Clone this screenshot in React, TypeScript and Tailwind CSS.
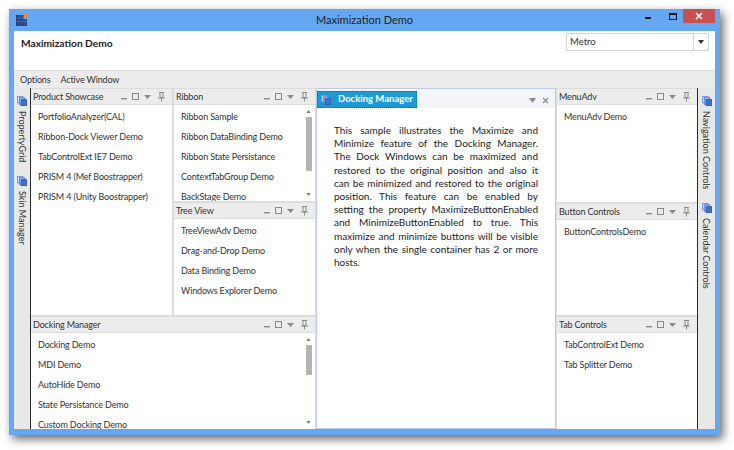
const FONT = "font-['Lato','Noto_Sans',sans-serif]";

function DocIcon({ size = 11 }: { size?: number }) {
  return (
    <svg width={size} height={size} viewBox="0 0 11 11" className="shrink-0" aria-hidden>
      <rect x="0.5" y="0.5" width="6" height="7" fill="#dbe8fa" stroke="#6f94d8" />
      <rect x="2.5" y="2" width="6" height="7" fill="#9dbdf0" stroke="#4f7dd0" />
      <rect x="4.5" y="4" width="6" height="6.5" fill="#3f70cc" stroke="#2f5fb8" />
    </svg>
  );
}

function PaneButtons() {
  return (
    <svg width="45" height="10" viewBox="0 0 45 10" className="shrink-0" aria-hidden>
      <rect x="0" y="6" width="6" height="1.4" fill="#8a8a8a" />
      <rect x="11.5" y="1.5" width="6" height="6" fill="none" stroke="#8a8a8a" />
      <path d="M23 3h7l-3.5 4z" fill="#8a8a8a" />
      <path d="M38 0.5h5M39 0.5v5h3v-5M37 6h7M40.5 6v3.5" fill="none" stroke="#8a8a8a" />
    </svg>
  );
}

function Scrollbar({ thumb }: { thumb: number }) {
  return (
    <div className="absolute bottom-0 right-[3px] top-0 flex w-[7px] flex-col items-center">
      <svg width="5" height="3" viewBox="0 0 5 3" className="mt-[5px] shrink-0" aria-hidden>
        <path d="M0.5 3h4L2.5 0z" fill="#777" />
      </svg>
      <div className="mt-[4px] w-[6px] bg-[#b4b4b4]" style={{ height: thumb }} />
      <div className="flex-1" />
      <svg width="5" height="3" viewBox="0 0 5 3" className="mb-[5px] shrink-0" aria-hidden>
        <path d="M0.5 0h4L2.5 3z" fill="#777" />
      </svg>
    </div>
  );
}

function Pane({
  title,
  items,
  thumb,
  className,
}: {
  title: string;
  items: string[];
  thumb?: number;
  className: string;
}) {
  return (
    <div className={`flex min-h-0 min-w-0 flex-col overflow-hidden bg-white ${className}`}>
      <div className="flex h-[16px] shrink-0 items-center justify-between border-b border-[#dcdcdc] bg-[#ececec] pl-[2px] pr-[6px] text-[9px] tracking-[-0.15px] text-[#333]">
        <span className="whitespace-nowrap">{title}</span>
        <PaneButtons />
      </div>
      <div className="relative min-h-0 flex-1 overflow-hidden pl-[7px] pt-[2px]">
        {items.map((item) => (
          <div
            key={item}
            className="h-[20px] whitespace-nowrap text-[9px] leading-[20px] tracking-[-0.15px] text-[#333]"
          >
            {item}
          </div>
        ))}
        {thumb ? <Scrollbar thumb={thumb} /> : null}
      </div>
    </div>
  );
}

function RailTab({ label, className }: { label: string; className?: string }) {
  return (
    <div className={`flex flex-col items-center gap-[5px] ${className ?? ""}`}>
      <DocIcon size={10} />
      <span className="whitespace-nowrap text-[9px] leading-none text-[#333] [writing-mode:vertical-rl]">
        {label}
      </span>
    </div>
  );
}

const DESCRIPTION = [
  "This sample illustrates the Maximize and",
  "Minimize feature of the Docking Manager.",
  "The Dock Windows can be maximized and",
  "restored to the original position and also it",
  "can be minimized and restored to the original",
  "position. This feature can be enabled by",
  "setting the property MaximizeButtonEnabled",
  "and MinimizeButtonEnabled to true. This",
  "maximize and minimize buttons will be visible",
  "only when the single container has 2 or more",
];

export default function App() {
  return (
    <div className={`h-[450px] w-[734px] overflow-hidden bg-white pl-[9px] pt-[9px] ${FONT}`}>
      <div className="flex h-[426px] w-[711px] flex-col bg-[#64a8f4] px-[5px] pb-[6px] shadow-[3px_4px_9px_rgba(0,0,0,0.6)]">
        {/* title bar */}
        <div className="relative flex h-[22px] shrink-0 items-center justify-center text-[11px] text-[#222]">
          <svg width="12" height="12" viewBox="0 0 12 12" className="absolute left-[2px] top-[5px]" aria-hidden>
            <path d="M0 1h7.5v11H0zM7.5 5H11v7H7.5z" fill="#26407f" />
            <path d="M3 1v11M6 1v11M0 4h8M0 7.5h11M9 5v7" stroke="#5d78b5" strokeWidth="0.5" />
            <rect x="8" y="0" width="3.5" height="3.5" fill="#f08a24" />
          </svg>
          <span>Maximization Demo</span>
          <div className="absolute right-0 top-0 flex h-[14px] items-start">
            <div className="mr-[18px] mt-[8px] h-[2px] w-[6px] bg-[#111]" />
            <div className="mr-[6px] mt-[4px] h-[7px] w-[8px] border border-t-2 border-[#111]" />
            <div className="flex h-[14px] w-[32px] items-center justify-center bg-[#c75050]">
              <svg width="8" height="8" viewBox="0 0 8 8" aria-hidden>
                <path d="M1 1l6 6M7 1L1 7" stroke="#fff" strokeWidth="1.6" />
              </svg>
            </div>
          </div>
        </div>

        {/* header */}
        <div className="flex h-[40px] shrink-0 justify-between border-b border-[#dcdcdc] bg-white pl-[7px] pr-[6px] pt-[2px]">
          <span className="mt-[3px] text-[10.2px] font-bold leading-[15px] text-[#222]">Maximization Demo</span>
          <div className="flex h-[18px] w-[143px] items-center justify-between border border-[#d4d4d4] bg-white pl-[3px] pr-[4px] text-[9.5px] text-[#333]">
            <span className="pt-[1px]">Metro</span>
            <span className="flex h-full items-center border-l border-[#d4d4d4] pl-[4px]">
              <svg width="6" height="4" viewBox="0 0 6 4" aria-hidden>
                <path d="M0 0h6L3 4z" fill="#333" />
              </svg>
            </span>
          </div>
        </div>

        {/* menu */}
        <div className="flex h-[17px] shrink-0 items-center gap-[10px] bg-[#ececec] pl-[6px] text-[9px] tracking-[-0.15px] text-[#333]">
          <span>Options</span>
          <span>Active Window</span>
        </div>

        {/* dock area */}
        <div className="flex min-h-0 flex-1 bg-[#e8e8e8]">
          <div className="flex w-[16px] shrink-0 flex-col items-center pt-[8px]">
            <RailTab label="PropertyGrid" />
            <RailTab label="Skin Manager" className="mt-[14px]" />
          </div>

          <div className="flex min-w-0 flex-1 border-x border-[#2a2a2a] bg-[#dcdcdc]">
            <div className="flex w-[284px] shrink-0 flex-col gap-[2px] pt-[1px]">
              <div className="flex h-[226px] shrink-0 gap-[2px]">
                <Pane
                  title="Product Showcase"
                  items={[
                    "PortfolioAnalyzer(CAL)",
                    "Ribbon-Dock Viewer Demo",
                    "TabControlExt IE7 Demo",
                    "PRISM 4 (Mef Boostrapper)",
                    "PRISM 4 (Unity Boostrapper)",
                  ]}
                  className="w-[141px] shrink-0"
                />
                <div className="flex min-w-0 flex-1 flex-col gap-[2px]">
                  <Pane
                    title="Ribbon"
                    items={[
                      "Ribbon Sample",
                      "Ribbon DataBinding Demo",
                      "Ribbon State Persistance",
                      "ContextTabGroup Demo",
                      "BackStage Demo",
                    ]}
                    thumb={54}
                    className="h-[112px] shrink-0"
                  />
                  <Pane
                    title="Tree View"
                    items={[
                      "TreeViewAdv Demo",
                      "Drag-and-Drop Demo",
                      "Data Binding Demo",
                      "Windows Explorer Demo",
                    ]}
                    className="flex-1"
                  />
                </div>
              </div>
              <Pane
                title="Docking Manager"
                items={[
                  "Docking Demo",
                  "MDI Demo",
                  "AutoHide Demo",
                  "State Persistance Demo",
                  "Custom Docking Demo",
                ]}
                thumb={30}
                className="flex-1"
              />
            </div>

            <div className="ml-[1px] flex w-[240px] shrink-0 flex-col border border-[#b9cdea] bg-white">
              <div className="flex h-[19px] shrink-0 items-end justify-between bg-[#f3f5f9]">
                <div className="flex h-[17px] w-[100px] items-center gap-[7px] border border-dotted border-[#555] bg-[#1c9ad6] pl-[3px] text-[9.5px] font-bold text-white">
                  <DocIcon size={10} />
                  <span className="whitespace-nowrap">Docking Manager</span>
                </div>
                <div className="flex items-center gap-[6px] pb-[4px] pr-[6px]">
                  <svg width="7" height="5" viewBox="0 0 7 5" aria-hidden>
                    <path d="M0 0h7L3.5 5z" fill="#8a8a8a" />
                  </svg>
                  <svg width="7" height="7" viewBox="0 0 7 7" aria-hidden>
                    <path d="M1 1l5 5M6 1L1 6" stroke="#8a8a8a" strokeWidth="1.1" />
                  </svg>
                </div>
              </div>
              <div className="px-[17px] pt-[16px] text-[10px] leading-[13.2px] text-[#222]">
                {DESCRIPTION.map((line) => (
                  <div key={line} className="text-justify [text-align-last:justify]">
                    {line}
                  </div>
                ))}
                <div>hosts.</div>
              </div>
            </div>

            <div className="ml-[1px] flex min-w-0 flex-1 flex-col gap-[2px] pt-[1px]">
              <Pane title="MenuAdv" items={["MenuAdv Demo"]} className="h-[113px] shrink-0" />
              <Pane title="Button Controls" items={["ButtonControlsDemo"]} className="h-[111px] shrink-0" />
              <Pane title="Tab Controls" items={["TabControlExt Demo", "Tab Splitter Demo"]} className="flex-1" />
            </div>
          </div>

          <div className="flex w-[17px] shrink-0 flex-col items-center pt-[8px]">
            <RailTab label="Navigation Controls" />
            <RailTab label="Calendar Controls" className="mt-[14px]" />
          </div>
        </div>
      </div>
    </div>
  );
}
